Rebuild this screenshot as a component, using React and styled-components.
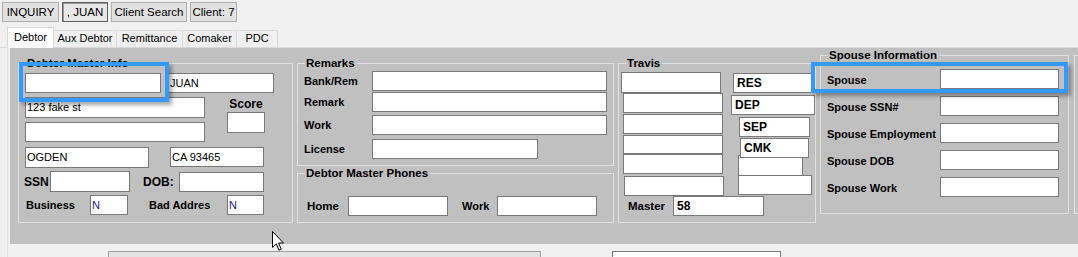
import styled, { createGlobalStyle, css } from "styled-components";

const GlobalStyle = createGlobalStyle`
  html, body {
    margin: 0;
    padding: 0;
    overflow: hidden;
    background: #f0f0f0;
  }
  body {
    font-family: "Liberation Sans", Arial, sans-serif;
    font-size: 11px;
    color: #000;
  }
`;

const travisLeft = [
  { ml: 2, mt: 0, h: 21 },
  { ml: 4, mt: 0, h: 20 },
  { ml: 4, mt: 1, h: 20 },
  { ml: 4, mt: 1, h: 19 },
  { ml: 4, mt: 0, h: 20 },
  { ml: 5, mt: 2, h: 20 },
];

const travisRight = [
  { text: "RES", ml: 8, mt: 1, w: 79 },
  { text: "DEP", ml: 6, mt: 2, w: 84 },
  { text: "SEP", ml: 14, mt: 2, w: 71 },
  { text: "CMK", ml: 15, mt: 1, w: 69, z: 2 },
  { text: "", ml: 13, mt: -3, w: 65, h: 21 },
  { text: "", ml: 13, mt: -1, w: 74 },
];

const spouseRows = ["Spouse", "Spouse SSN#", "Spouse Employment", "Spouse DOB", "Spouse Work"];

function App() {
  return (
    <Screen>
      <GlobalStyle />
      <Toolbar>
        <ToolButton $w={57}>INQUIRY</ToolButton>
        <ToolButton $w={46} $pressed>, JUAN</ToolButton>
        <ToolButton $w={76}>Client Search</ToolButton>
        <ToolButton $w={47}>Client: 7</ToolButton>
      </Toolbar>

      <TabStrip>
        <Tab $active $w={47}>Debtor</Tab>
        <Tab $w={63}>Aux Debtor</Tab>
        <Tab $w={66}>Remittance</Tab>
        <Tab $w={54}>Comaker</Tab>
        <Tab $w={41}>PDC</Tab>
      </TabStrip>

      <TabPage>
        <Panel>
          <Group $w={275} $h={160} $mt={8} $pad="9px 0 0 6px">
            <GroupTitle>Debtor Master Info</GroupTitle>
            <Row>
              <Field $w={136} />
              <Field $w={106} $ml={7}>JUAN</Field>
            </Row>
            <Row $mt={4} $align="flex-start">
              <Stack $gap={4}>
                <Field $w={180} $h={21}>123 fake st</Field>
                <Field $w={180} />
              </Stack>
              <ScoreCol>
                <Label $size={12}>Score</Label>
                <Field $w={38} $h={21} $mt={1} />
              </ScoreCol>
            </Row>
            <Row $mt={5} $align="flex-start">
              <Field $w={124} $h={21}>OGDEN</Field>
              <Field $w={94} $ml={21}>CA 93465</Field>
            </Row>
            <Row $mt={3}>
              <Label $size={12} $w={26} $ml={-1}>SSN</Label>
              <Field $w={80} $h={21} />
              <Label $size={12} $w={36} $ml={13}>DOB:</Label>
              <Field $w={85} />
            </Row>
            <Row $mt={3}>
              <Label $w={64} $ml={1}>Business</Label>
              <Field $w={38} $tone="#1a1a8c">N</Field>
              <Label $w={78} $ml={21}>Bad Addres</Label>
              <Field $w={37} $tone="#1a1a8c">N</Field>
            </Row>
            <Highlight $left={0} $top={-2} $w={150} $h={40} />
          </Group>

          <Stack $gap={7} $mt={8}>
            <Group $w={317} $h={103} $pad="7px 0 0 6px">
              <GroupTitle>Remarks</GroupTitle>
              <Row>
                <Label $w={68}>Bank/Rem</Label>
                <Field $w={235} />
              </Row>
              <Row $mt={1}>
                <Label $w={68}>Remark</Label>
                <Field $w={235} />
              </Row>
              <Row $mt={3}>
                <Label $w={68}>Work</Label>
                <Field $w={235} />
              </Row>
              <Row $mt={4}>
                <Label $w={68}>License</Label>
                <Field $w={166} />
              </Row>
            </Group>
            <Group $w={317} $h={50} $pad="22px 0 0 9px">
              <GroupTitle>Debtor Master Phones</GroupTitle>
              <Row>
                <Label $w={41} $size={11.5}>Home</Label>
                <Field $w={100} />
                <Label $w={35} $ml={14}>Work</Label>
                <Field $w={100} />
              </Row>
            </Group>
          </Stack>

          <Group $w={198} $h={160} $mt={8} $pad="8px 0 0 0">
            <GroupTitle>Travis</GroupTitle>
            <Row $align="flex-start">
              <Stack $w={106}>
                {travisLeft.map((b, i) => (
                  <Field key={i} $w={100} $h={b.h} $ml={b.ml} $mt={b.mt} />
                ))}
              </Stack>
              <Stack>
                {travisRight.map((b, i) => (
                  <Field
                    key={i}
                    $w={b.w}
                    $h={b.h || 20}
                    $ml={b.ml}
                    $mt={b.mt}
                    $z={b.z}
                    $bold
                  >
                    {b.text}
                  </Field>
                ))}
              </Stack>
            </Row>
            <Row>
              <Label $w={45} $ml={9} $size={11.5}>Master</Label>
              <Field $w={91} $bold>58</Field>
            </Row>
          </Group>

          <Group $w={249} $h={159} $pad="13px 0 0 6px">
            <GroupTitle>Spouse Information</GroupTitle>
            <Stack $gap={7}>
              {spouseRows.map((name) => (
                <Row key={name}>
                  <Label $w={113} $dy={2}>{name}</Label>
                  <Field $w={119} />
                </Row>
              ))}
            </Stack>
            <Highlight $left={-10} $top={6} $w={257} $h={31} />
          </Group>

          <Group $w={20} $h={159} $ml={1} />
        </Panel>

        <BottomRow>
          <GreyBox />
          <BottomField />
        </BottomRow>
      </TabPage>

      <Cursor width="13" height="21" viewBox="0 0 13 21">
        <path
          d="M0.5 0.5 L0.5 16.5 L4.3 12.8 L6.9 19.2 L9.2 18.2 L6.6 12 L11.5 12 Z"
          fill="#fff"
          stroke="#000"
          strokeWidth="1"
          strokeLinejoin="miter"
        />
      </Cursor>
    </Screen>
  );
}

const Screen = styled.div`
  position: relative;
  width: 1078px;
  height: 257px;
  overflow: hidden;
  background: #f0f0f0;
`;

const Toolbar = styled.div`
  display: flex;
  gap: 3px;
  padding: 2px 0 0 2px;
  height: 20px;
`;

const ToolButton = styled.button`
  box-sizing: border-box;
  width: ${(p) => p.$w}px;
  height: 20px;
  padding: 0;
  font-family: "Liberation Sans", Arial, sans-serif;
  font-size: 11.5px;
  color: #000;
  background: #e1e1e1;
  border: 1px solid #adadad;
  white-space: nowrap;
  ${(p) =>
    p.$pressed &&
    css`
      background: #e8e8e8;
      border-color: #5f5f5f;
      box-shadow: inset 1px 1px 0 #9a9a9a;
    `}
`;

const TabStrip = styled.div`
  display: flex;
  align-items: flex-end;
  height: 21px;
  margin-top: 5px;
  padding-left: 7px;
  box-shadow: inset 0 -1px 0 #d9d9d9;
`;

const Tab = styled.div`
  box-sizing: border-box;
  width: ${(p) => p.$w}px;
  height: ${(p) => (p.$active ? 21 : 17)}px;
  margin-bottom: ${(p) => (p.$active ? 0 : 1)}px;
  background: ${(p) => (p.$active ? "#fff" : "#f0f0f0")};
  border: 1px solid #d9d9d9;
  border-bottom: none;
  border-left-width: ${(p) => (p.$active ? 1 : 0)}px;
  font-size: 11px;
  line-height: ${(p) => (p.$active ? 19 : 15)}px;
  text-align: center;
  white-space: nowrap;
`;

const TabPage = styled.div`
  margin-left: 7px;
  padding-left: 2px;
  border-left: 1px solid #e2e2e2;
  height: 209px;
`;

const Panel = styled.div`
  box-sizing: border-box;
  display: flex;
  align-items: flex-start;
  gap: 4px;
  height: 196px;
  padding: 7px 0 0 8px;
  background: #c0c0c0;
  overflow: hidden;
`;

const Group = styled.div`
  position: relative;
  box-sizing: border-box;
  flex-shrink: 0;
  width: ${(p) => p.$w}px;
  height: ${(p) => p.$h}px;
  margin-top: ${(p) => p.$mt || 0}px;
  margin-left: ${(p) => p.$ml || 0}px;
  padding: ${(p) => p.$pad || 0};
  border: 1px solid #e0e0e0;
`;

const GroupTitle = styled.span`
  position: absolute;
  top: -8px;
  left: 7px;
  padding: 0 2px 0 1px;
  background: #c0c0c0;
  font-weight: bold;
  font-size: 11.5px;
  line-height: 14px;
  white-space: nowrap;
`;

const Highlight = styled.div`
  position: absolute;
  left: ${(p) => p.$left}px;
  top: ${(p) => p.$top}px;
  width: ${(p) => p.$w}px;
  height: ${(p) => p.$h}px;
  box-sizing: border-box;
  border: 4px solid #3399ff;
  box-shadow: 3px 3px 4px rgba(0, 0, 0, 0.35);
  z-index: 5;
`;

const Row = styled.div`
  display: flex;
  align-items: ${(p) => p.$align || "center"};
  margin-top: ${(p) => p.$mt || 0}px;
`;

const Stack = styled.div`
  display: flex;
  flex-direction: column;
  flex-shrink: 0;
  gap: ${(p) => p.$gap || 0}px;
  margin-top: ${(p) => p.$mt || 0}px;
  width: ${(p) => (p.$w ? `${p.$w}px` : "auto")};
`;

const ScoreCol = styled.div`
  display: flex;
  flex-direction: column;
  align-items: center;
  margin-left: 22px;
  line-height: 14px;
`;

const Field = styled.div`
  position: relative;
  z-index: ${(p) => p.$z || 0};
  box-sizing: border-box;
  flex-shrink: 0;
  width: ${(p) => p.$w}px;
  height: ${(p) => p.$h || 20}px;
  margin-left: ${(p) => p.$ml || 0}px;
  margin-top: ${(p) => p.$mt || 0}px;
  padding: 0 ${(p) => (p.$bold ? 3 : 1)}px;
  background: #fff;
  border: 1px solid #7a7a7a;
  color: ${(p) => p.$tone || "#000"};
  font-size: ${(p) => (p.$bold ? 12 : 11)}px;
  font-weight: ${(p) => (p.$bold ? "bold" : "normal")};
  line-height: ${(p) => (p.$h || 20) - 2}px;
  white-space: nowrap;
  overflow: hidden;
`;

const Label = styled.span`
  flex-shrink: 0;
  width: ${(p) => (p.$w ? `${p.$w}px` : "auto")};
  margin-left: ${(p) => p.$ml || 0}px;
  padding-top: ${(p) => p.$dy || 0}px;
  font-weight: bold;
  font-size: ${(p) => p.$size || 11}px;
  line-height: 14px;
  white-space: nowrap;
  color: #000;
`;

const BottomRow = styled.div`
  display: flex;
  padding-top: 7px;
  margin-left: 98px;
`;

const GreyBox = styled.div`
  box-sizing: border-box;
  width: 433px;
  height: 20px;
  background: #e3e3e3;
  border: 1px solid #a0a0a0;
`;

const BottomField = styled.div`
  box-sizing: border-box;
  width: 169px;
  height: 20px;
  margin-left: 71px;
  background: #fff;
  border: 1px solid #7a7a7a;
`;

const Cursor = styled.svg`
  position: absolute;
  left: 272px;
  top: 231px;
  z-index: 10;
`;

export default App;
